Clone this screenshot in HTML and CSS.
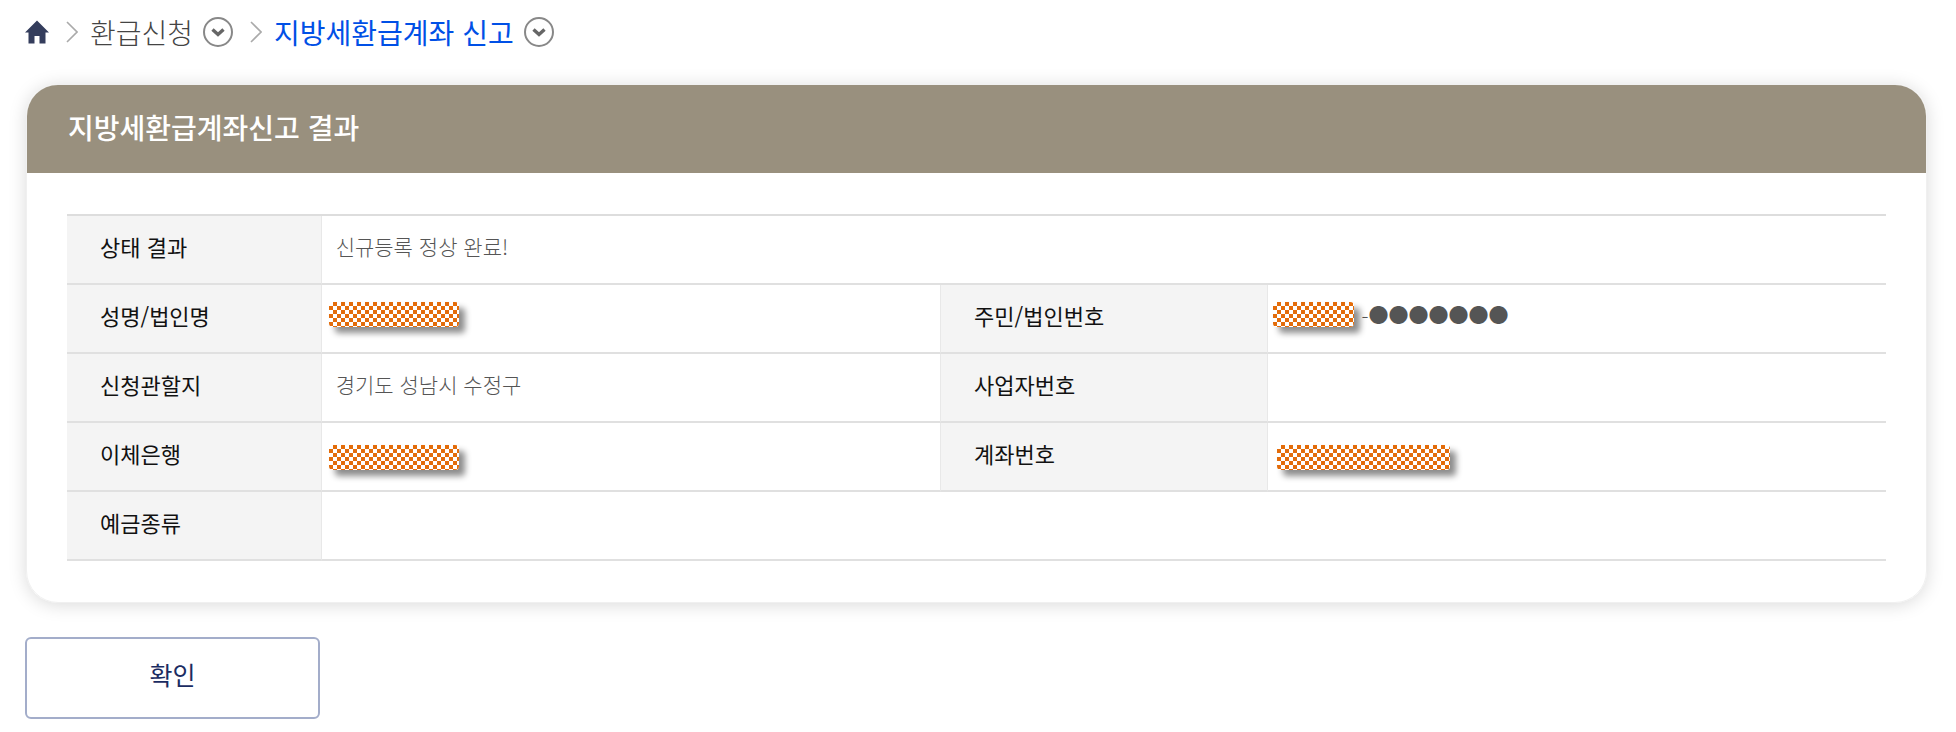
FILE: index.html
```html
<!DOCTYPE html>
<html lang="ko">
<head>
    <meta charset="UTF-8">
    <meta name="viewport" content="width=device-width, initial-scale=1.0">
    <title>지방세환급계좌 신고</title>
    <link rel="stylesheet" href="styles.css">
</head>
<body>
    <nav class="location">
        <a href="#" class="home" aria-label="홈">
            <svg width="24" height="24" viewBox="0 0 24 24"><path d="M12 0.5L24 12.5H20.500V23.500H14.500V16H9.500V23.500H3.500V12.500H0Z" fill="#343d5c"/></svg>
        </a>
        <svg class="arrow" width="12" height="22" viewBox="0 0 12 22"><path d="M1 1L11 11L1 21" fill="none" stroke="#aaa" stroke-width="1.600"/></svg>
        <a href="#" class="menu">환급신청</a>
        <button type="button" class="toggle" aria-label="환급신청 메뉴 열기">
            <svg width="30" height="30" viewBox="0 0 30 30"><circle cx="15" cy="15" r="14" fill="none" stroke="#888" stroke-width="2"/><path d="M9.500 12.500L15 17.500L20.500 12.500" fill="none" stroke="#666" stroke-width="3.400"/></svg>
        </button>
        <svg class="arrow" width="12" height="22" viewBox="0 0 12 22"><path d="M1 1L11 11L1 21" fill="none" stroke="#aaa" stroke-width="1.600"/></svg>
        <a href="#" class="menu on">지방세환급계좌 신고</a>
        <button type="button" class="toggle" aria-label="지방세환급계좌 신고 메뉴 열기">
            <svg width="30" height="30" viewBox="0 0 30 30"><circle cx="15" cy="15" r="14" fill="none" stroke="#888" stroke-width="2"/><path d="M9.500 12.500L15 17.500L20.500 12.500" fill="none" stroke="#666" stroke-width="3.400"/></svg>
        </button>
    </nav>

    <section class="card">
        <h1>지방세환급계좌신고 결과</h1>
        <div class="card-body">
            <table>
                <colgroup>
                    <col class="col-label">
                    <col class="col-value">
                    <col class="col-label2">
                    <col class="col-value">
                </colgroup>
                <tbody>
                    <tr>
                        <th scope="row">상태 결과</th>
                        <td colspan="3">신규등록 정상 완료!</td>
                    </tr>
                    <tr>
                        <th scope="row">성명/법인명</th>
                        <td><span class="mask"></span></td>
                        <th scope="row">주민/법인번호</th>
                        <td class="jumin"><span class="mask short"></span>-<span class="dots">●●●●●●●</span></td>
                    </tr>
                    <tr>
                        <th scope="row">신청관할지</th>
                        <td>경기도 성남시 수정구</td>
                        <th scope="row">사업자번호</th>
                        <td></td>
                    </tr>
                    <tr>
                        <th scope="row">이체은행</th>
                        <td><span class="mask low"></span></td>
                        <th scope="row">계좌번호</th>
                        <td><span class="mask low long"></span></td>
                    </tr>
                    <tr>
                        <th scope="row">예금종류</th>
                        <td colspan="3"></td>
                    </tr>
                </tbody>
            </table>
        </div>
    </section>

    <button type="button" class="confirm">확인</button>
</body>
</html>
```
FILE: styles.css
```css
*{
    margin: 0;
    padding: 0;
    box-sizing: border-box;
}
body{
    background: #fff;
    font-family: "Noto Sans CJK KR", sans-serif;
    font-size: 22px;
    color: #555;
}
a{
    text-decoration: none;
}
svg{
    display: block;
}
button{
    font-family: inherit;
    cursor: pointer;
}

/* 현재 위치 */
.location{
    display: flex;
    align-items: center;
    height: 64px;
    padding: 0 25px;
}
.location .arrow{
    margin: 0 12px 0 17px;
}
.location .menu{
    font-size: 28px;
    line-height: 40px;
    font-weight: 300;
    color: #444;
}
.location .on{
    font-weight: 400;
    color: #0050e6;
}
.toggle{
    width: 30px;
    height: 30px;
    margin-left: 10px;
    border: 0;
    background: none;
}

/* 결과 */
.card{
    margin: 20px 29px 0 26px;
    border: 1px solid #f0f0f0;
    border-radius: 32px;
    overflow: hidden;
    box-shadow: 0 2px 18px rgba(0,0,0,0.15);
}
.card h1{
    height: 88px;
    padding-left: 41px;
    background: #99907e;
    font-size: 28px;
    line-height: 84px;
    font-weight: 500;
    color: #fff;
}
.card-body{
    padding: 41px 40px;
}
table{
    width: 100%;
    table-layout: fixed;
    border-collapse: separate;
    border-spacing: 0;
    border-top: 2px solid #ddd;
}
.col-label{
    width: 14%;
}
.col-label2{
    width: 18%;
}
.col-value{
    width: 34%;
}
th, td{
    position: relative;
    height: 69px;
    padding-bottom: 8px;
    border-bottom: 2px solid #e0e0e0;
    line-height: 32px;
    text-align: left;
}
th{
    padding-left: 33px;
    background: #f4f4f4;
    border-right: 1px solid #e8e8e8;
    font-weight: 400;
    color: #111;
}
td{
    padding-left: 14px;
    font-size: 21px;
    font-weight: 300;
}
td + th{
    border-left: 1px solid #e8e8e8;
}
.jumin{
    padding-left: 94px;
}
.dots{
    font-size: 20px;
}

/* 개인정보 가림 */
.mask{
    position: absolute;
    top: 17px;
    left: 7px;
    width: 130px;
    height: 25px;
    border-radius: 4px;
    background: repeating-conic-gradient(#e36c0a 0 25%, #fff 0 50%) 0 0 / 8px 8px;
    box-shadow: 6px 6px 6px rgba(0,0,0,0.45);
}
.mask.short{
    left: 5px;
    width: 81px;
}
.mask.low{
    top: 22px;
}
.mask.long{
    left: 9px;
    width: 173px;
}

.confirm{
    display: block;
    width: 295px;
    height: 82px;
    margin: 34px 0 14px 25px;
    padding-bottom: 8px;
    border: 2px solid #a3adca;
    border-radius: 6px;
    background: #fff;
    font-size: 25px;
    color: #1b2c62;
}
```
